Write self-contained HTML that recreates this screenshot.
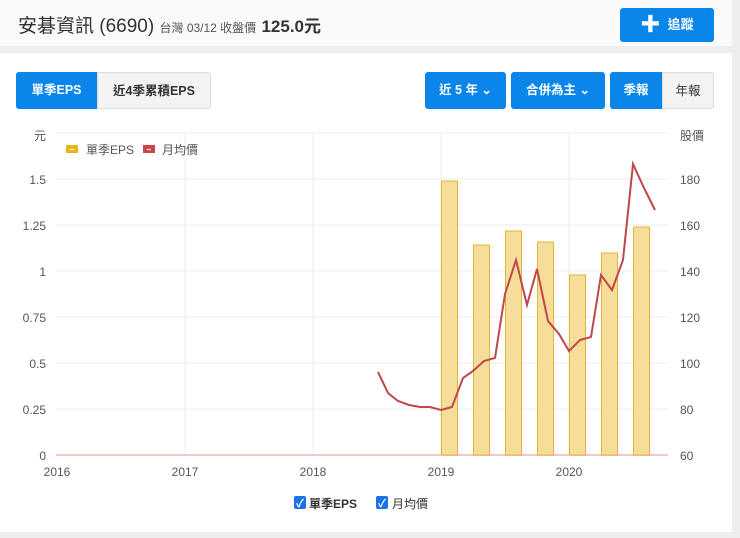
<!DOCTYPE html>
<html><head><meta charset="utf-8"><style>
body{margin:0;width:740px;height:538px;background:#eee;font-family:"Liberation Sans","Noto Sans CJK TC",sans-serif;position:relative;overflow:hidden}
.top{position:absolute;left:0;top:0;width:732px;height:46px;background:#fafafa}
.title{position:absolute;left:18px;top:11px;font-size:19px;color:#333}
.title small{font-size:12px;color:#555}
.title b{font-size:17px;font-weight:bold}
.follow{position:absolute;left:620px;top:8px;width:94px;height:34px;background:#0a85e9;border-radius:3px;color:#fff;font-size:13px;font-weight:bold;line-height:34px;text-align:center}
.card{position:absolute;left:0;top:53px;width:732px;height:479px;background:#fff}
.btn{position:absolute;top:19px;height:37px;line-height:37px;font-size:12.5px;font-weight:bold;text-align:center;box-sizing:border-box}
.b{background:#0a85e9;color:#fff}
.g{background:#f3f3f3;color:#333;border:1px solid #ddd}
</style></head><body>
<div class="top"><div class="title">安碁資訊 (6690) <small>台灣 03/12 收盤價</small> <b>125.0元</b></div>
<div class="follow"><span style="font-size:20px;vertical-align:-2px">✚</span>&nbsp; 追蹤</div></div>
<div class="card">
<div class="btn b" style="left:16px;width:81px;border-radius:3px 0 0 3px">單季EPS</div>
<div class="btn g" style="left:97px;width:114px;border-radius:0 3px 3px 0">近4季累積EPS</div>
<div class="btn b" style="left:425px;width:81px;border-radius:3px">近 5 年 ⌄</div>
<div class="btn b" style="left:511px;width:94px;border-radius:3px">合併為主 ⌄</div>
<div class="btn b" style="left:610px;width:52px;border-radius:3px 0 0 3px">季報</div>
<div class="btn g" style="left:662px;width:52px;border-radius:0 3px 3px 0;font-weight:normal">年報</div>
</div>
<svg style="position:absolute;left:0;top:0" width="740" height="538" font-family="Liberation Sans,Noto Sans CJK TC,sans-serif" font-size="12" fill="#555">
<g stroke="#ececec" stroke-width="1">
<line x1="56" y1="133" x2="668" y2="133"/><line x1="56" y1="179" x2="668" y2="179"/><line x1="56" y1="225" x2="668" y2="225"/><line x1="56" y1="271" x2="668" y2="271"/><line x1="56" y1="317" x2="668" y2="317"/><line x1="56" y1="363" x2="668" y2="363"/><line x1="56" y1="409" x2="668" y2="409"/>
<line x1="185" y1="133" x2="185" y2="455"/><line x1="313" y1="133" x2="313" y2="455"/><line x1="441" y1="133" x2="441" y2="455"/><line x1="569" y1="133" x2="569" y2="455"/>
</g>
<line x1="56" y1="455" x2="668" y2="455" stroke="#f0c8c8" stroke-width="2"/>
<g text-anchor="end"><text x="46" y="140">元</text><text x="46" y="184">1.5</text><text x="46" y="230">1.25</text><text x="46" y="276">1</text><text x="46" y="322">0.75</text><text x="46" y="368">0.5</text><text x="46" y="414">0.25</text><text x="46" y="460">0</text></g>
<g><text x="680" y="140">股價</text><text x="680" y="184">180</text><text x="680" y="230">160</text><text x="680" y="276">140</text><text x="680" y="322">120</text><text x="680" y="368">100</text><text x="680" y="414">80</text><text x="680" y="460">60</text></g>
<g text-anchor="middle"><text x="57" y="476">2016</text><text x="185" y="476">2017</text><text x="313" y="476">2018</text><text x="441" y="476">2019</text><text x="569" y="476">2020</text></g>
<rect x="66" y="145" width="12" height="8" fill="#e8b422"/><rect x="70" y="149" width="4" height="1" fill="#fff"/>
<text x="86" y="154">單季EPS</text>
<rect x="143" y="145" width="12" height="8" fill="#c84848"/><rect x="147" y="149" width="4" height="1" fill="#fff"/>
<text x="162" y="154">月均價</text>
<g fill="#f6de9a" stroke="#e0b53a" stroke-width="1">
<rect x="441.5" y="181" width="16" height="274"/><rect x="473.5" y="245" width="16" height="210"/><rect x="505.5" y="231" width="16" height="224"/><rect x="537.5" y="242" width="16" height="213"/><rect x="569.5" y="275" width="16" height="180"/><rect x="601.5" y="253" width="16" height="202"/><rect x="633.5" y="227" width="16" height="228"/>
</g>
<polyline fill="none" stroke="#c0474a" stroke-width="2" points="378,372 388,393 398,401 409,405 420,407 430,407 441,410 452,407 463,378 473,371 484,361 495,358 505,294 516,260 527,305 537,269 548,321 559,334 569,351 580,340 591,337 601,275 612,290 623,260 633,164 644,188 655,210"/>
<rect x="294" y="496" width="12" height="13" rx="2" fill="#1a73e8"/><text x="296" y="507" fill="#fff" font-size="11" font-weight="bold">✓</text>
<text x="309" y="508" fill="#333" font-weight="bold">單季EPS</text>
<rect x="376" y="496" width="12" height="13" rx="2" fill="#1a73e8"/><text x="378" y="507" fill="#fff" font-size="11" font-weight="bold">✓</text>
<text x="392" y="508" fill="#333">月均價</text>
</svg>
</body></html>
